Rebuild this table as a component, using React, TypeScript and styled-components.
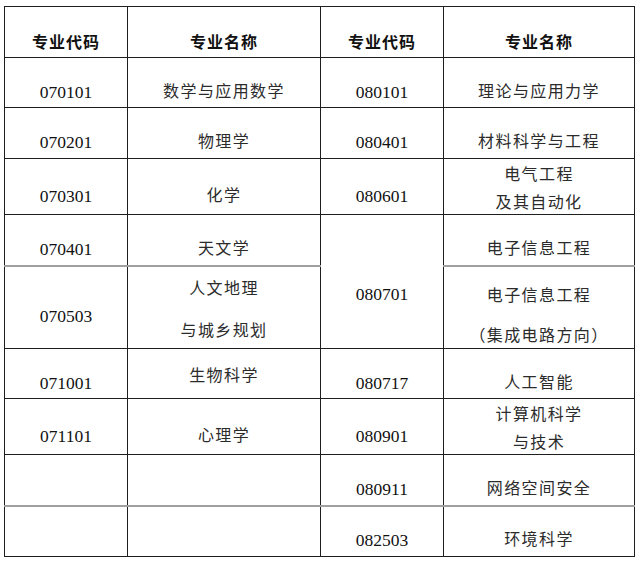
import React from 'react';
import styled, { createGlobalStyle } from 'styled-components';

const GlobalStyle = createGlobalStyle`
  html, body {
    margin: 0;
    padding: 0;
    background: #ffffff;
  }
`;

const Page = styled.div`
  padding: 6px 0 0 4px;
`;

const Table = styled.table`
  border-collapse: collapse;
  table-layout: fixed;
  width: 630px;
  font-family: "Liberation Serif", "Noto Sans CJK SC", serif;
  color: #1a1a1a;
`;

const Row = styled.tr<{ $h: number; $soft?: boolean }>`
  height: ${({ $h }) => $h}px;

  & > td {
    border-top: ${({ $soft }) => ($soft ? '2px solid #a0a0a0' : '1px solid #1e1e1e')};
  }
`;

const HeadCell = styled.th`
  border: 1px solid #1e1e1e;
  padding: 18px 0 0;
  font-family: "Noto Sans CJK SC", sans-serif;
  font-size: 16px;
  line-height: 20px;
  font-weight: 700;
  letter-spacing: 1px;
  color: #111111;
  text-align: center;
  vertical-align: middle;
`;

const Cell = styled.td<{ $pt?: number; $cn?: boolean }>`
  border: 1px solid #1e1e1e;
  padding: ${({ $pt = 18 }) => $pt}px 0 0;
  font-size: ${({ $cn }) => ($cn ? '16px' : '17.5px')};
  line-height: 20px;
  letter-spacing: ${({ $cn }) => ($cn ? '1.4px' : '0')};
  color: ${({ $cn }) => ($cn ? '#2b2b2b' : '#111111')};
  text-align: center;
  vertical-align: middle;
  white-space: nowrap;
`;

const Lines = styled.div<{ $gap: number }>`
  display: flex;
  flex-direction: column;
  align-items: center;
  gap: ${({ $gap }) => $gap}px;
`;

const Code: React.FC<{ value?: string; pt?: number; rowSpan?: number }> = ({ value, pt, rowSpan }) => (
  <Cell $pt={pt} rowSpan={rowSpan}>{value}</Cell>
);

const Name: React.FC<{ lines?: string[]; pt?: number; spacing?: number }> = ({ lines = [], pt, spacing = 28 }) => (
  <Cell $cn $pt={pt}>
    {lines.length > 1 ? (
      <Lines $gap={spacing - 20}>
        {lines.map(line => (
          <span key={line}>{line}</span>
        ))}
      </Lines>
    ) : (
      lines[0]
    )}
  </Cell>
);

const App: React.FC = () => (
  <Page>
    <GlobalStyle />
    <Table>
      <colgroup>
        <col style={{ width: 123 }} />
        <col style={{ width: 193 }} />
        <col style={{ width: 123 }} />
        <col style={{ width: 191 }} />
      </colgroup>
      <tbody>
        <Row $h={51}>
          <HeadCell>专业代码</HeadCell>
          <HeadCell>专业名称</HeadCell>
          <HeadCell>专业代码</HeadCell>
          <HeadCell>专业名称</HeadCell>
        </Row>
        <Row $h={50}>
          <Code value="070101" />
          <Name lines={['数学与应用数学']} />
          <Code value="080101" />
          <Name lines={['理论与应用力学']} />
        </Row>
        <Row $h={51}>
          <Code value="070201" />
          <Name lines={['物理学']} />
          <Code value="080401" />
          <Name lines={['材料科学与工程']} />
        </Row>
        <Row $h={56}>
          <Code value="070301" />
          <Name lines={['化学']} />
          <Code value="080601" />
          <Name lines={['电气工程', '及其自动化']} pt={4} spacing={28} />
        </Row>
        <Row $h={51}>
          <Code value="070401" />
          <Name lines={['天文学']} />
          <Code value="080701" rowSpan={2} pt={24} />
          <Name lines={['电子信息工程']} />
        </Row>
        <Row $h={83} $soft>
          <Code value="070503" />
          <Name lines={['人文地理', '与城乡规划']} pt={5} spacing={42} />
          <Name lines={['电子信息工程', '（集成电路方向）']} pt={17} spacing={40} />
        </Row>
        <Row $h={50}>
          <Code value="071001" />
          <Name lines={['生物科学']} pt={4} />
          <Code value="080717" />
          <Name lines={['人工智能']} />
        </Row>
        <Row $h={56}>
          <Code value="071101" />
          <Name lines={['心理学']} />
          <Code value="080901" />
          <Name lines={['计算机科学', '与技术']} pt={4} spacing={28} />
        </Row>
        <Row $h={51}>
          <Code />
          <Name />
          <Code value="080911" />
          <Name lines={['网络空间安全']} />
        </Row>
        <Row $h={51} $soft>
          <Code />
          <Name />
          <Code value="082503" />
          <Name lines={['环境科学']} />
        </Row>
      </tbody>
    </Table>
  </Page>
);

export default App;
